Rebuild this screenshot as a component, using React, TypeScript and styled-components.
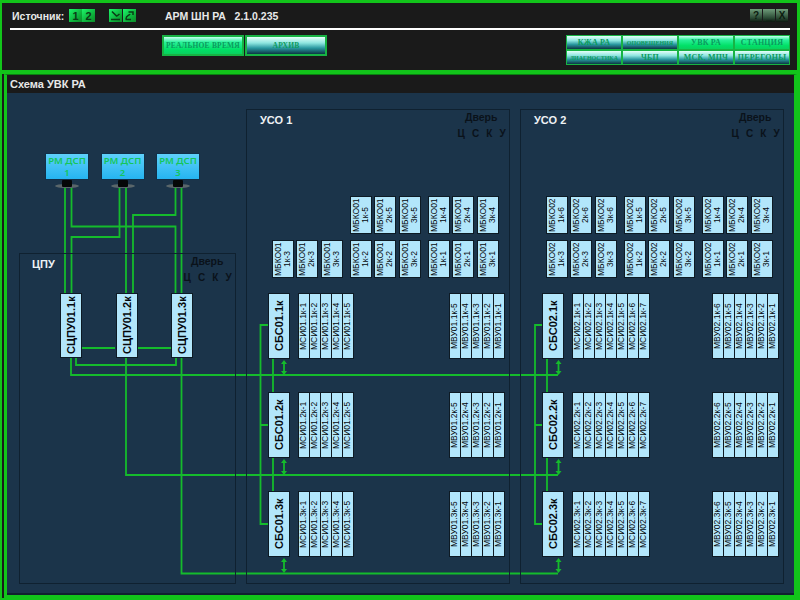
import * as React from 'react';
import styled, { createGlobalStyle } from 'styled-components';

const GREEN = '#12c41a';
const WIRE = '#15bb2c';

const GlobalStyle = createGlobalStyle`
  html, body {
    margin: 0;
    padding: 0;
    background: #1a1a1a;
  }
  * {
    box-sizing: border-box;
  }
`;

const Frame = styled.div`
  width: 800px;
  height: 600px;
  display: flex;
  flex-direction: column;
  overflow: hidden;
  background: #1a1a1a;
  border-style: solid;
  border-color: ${GREEN};
  border-width: 3px 3px 2px 2px;
  font-family: 'Liberation Sans', Arial, sans-serif;
`;

const Header = styled.header`
  height: 71px;
  flex: none;
  margin-right: -3px;
  margin-left: -2px;
  padding: 6px 10px 0 10px;
  border-bottom: 4px solid ${GREEN};
  display: flex;
  flex-direction: column;
`;

const TopRow = styled.div`
  height: 13px;
  display: flex;
  align-items: center;
`;

const Label = styled.span`
  color: #e8e8e8;
  font-size: 10.5px;
  font-weight: 700;
  white-space: pre;
`;

const SourceLabel = styled(Label)`
  margin-left: 2px;
  width: 57px;
`;

const IconGroup = styled.div<{ $gap: number }>`
  display: flex;
  gap: ${(p) => p.$gap}px;
  margin-right: 14px;
`;

const SourceButton = styled.div`
  width: 13px;
  height: 13px;
  display: flex;
  align-items: center;
  justify-content: center;
  background: linear-gradient(135deg, #1cf56a, #0ca836 70%, #0f8a2c);
  color: #0a3c16;
  font-size: 11px;
  font-weight: 700;
`;

const Title = styled(Label)`
  margin-left: 15px;
  flex: 1;
`;

const WindowButtons = styled.div`
  display: flex;
  gap: 1px;
  margin-right: 2px;
`;

const WindowButton = styled.div`
  width: 12px;
  height: 13px;
  display: flex;
  align-items: center;
  justify-content: center;
  background: linear-gradient(#6f9c7a, #2a4a34 70%, #0c160f);
  color: #0c1c10;
  font-size: 10px;
  font-weight: 700;
`;

const Rule = styled.div`
  height: 2px;
  margin-top: 6px;
  background: #fff;
`;

const ModeRow = styled.div`
  display: flex;
  justify-content: space-between;
  margin-top: 5px;
  padding-left: 152px;
`;

const ModeGroup = styled.div`
  display: flex;
  gap: 1px;
  align-items: flex-start;
`;

const NavGrid = styled.div`
  display: grid;
  grid-template-columns: repeat(4, 56px);
  grid-auto-rows: 15px;
`;

const GlossButton = styled.div<{ $active?: boolean; $wide?: boolean; $small?: boolean }>`
  width: ${(p) => (p.$wide ? '82px' : 'auto')};
  height: ${(p) => (p.$wide ? '21px' : 'auto')};
  display: flex;
  align-items: center;
  justify-content: center;
  border: ${(p) => (p.$wide ? 2 : 1)}px solid #17b344;
  background: ${(p) =>
    p.$active
      ? 'linear-gradient(#c8fff0, #2af29a 30%, #00e066 75%, #0ad060)'
      : 'linear-gradient(#e4fff8, #8fe6e0 35%, #2a98a0 65%, #0c3644)'};
  color: #0b9a5e;
  font-family: 'Liberation Serif', 'Times New Roman', serif;
  font-size: ${(p) => (p.$wide ? 7.5 : p.$small ? 6 : 8)}px;
  font-weight: 700;
  letter-spacing: ${(p) => (p.$small ? 0 : 0.2)}px;
  white-space: nowrap;
`;

const Panel = styled.section`
  flex: 1;
  min-height: 0;
  display: flex;
  flex-direction: column;
  margin-left: 2px;
  border-style: solid;
  border-color: #0a7f12 ${GREEN} ${GREEN} ${GREEN};
  border-width: 1px 3px 3px 3px;
`;

const PanelTitle = styled.div`
  height: 18px;
  flex: none;
  padding-left: 3px;
  display: flex;
  align-items: center;
  color: #e8e8e8;
  font-size: 11px;
  font-weight: 700;
  background: #1a1a1a;
`;

const Diagram = styled.div`
  position: relative;
  flex: 1;
  min-height: 0;
  display: flex;
  gap: 10px;
  padding: 16px 0 9px 12px;
  background: #1b344a;
  border-bottom: 2px solid #10212e;
`;

const Wires = styled.svg`
  position: absolute;
  left: 0;
  top: 0;
`;

const LeftColumn = styled.div`
  width: 217px;
  display: flex;
  flex-direction: column;
`;

const Monitors = styled.div`
  position: relative;
  display: flex;
  gap: 11.5px;
  margin: 44px 0 0 26px;
`;

const MonitorUnit = styled.div`
  width: 44px;
  display: flex;
  flex-direction: column;
  align-items: center;
`;

const Screen = styled.div`
  width: 44px;
  height: 27px;
  display: flex;
  flex-direction: column;
  align-items: center;
  justify-content: center;
  border: 1px solid #123048;
  background: linear-gradient(#5fd0fa, #25b4f0);
  color: #14c65c;
  font-family: 'Noto Sans', 'Open Sans', sans-serif;
  font-size: 9.5px;
  font-weight: 600;
  line-height: 12px;
  white-space: nowrap;
`;

const Cabinet = styled.div<{ $width?: number; $height?: number }>`
  position: relative;
  width: ${(p) => (p.$width ? `${p.$width}px` : '100%')};
  height: ${(p) => (p.$height ? `${p.$height}px` : 'auto')};
  margin-top: ${(p) => (p.$height ? 'auto' : '0')};
  border: 1px solid #0f2130;
`;

const CabinetHead = styled.div<{ $height: number; $pad: number }>`
  height: ${(p) => p.$height}px;
  display: flex;
  justify-content: space-between;
  padding: 1px 1px 0 ${(p) => p.$pad}px;
`;

const CabinetName = styled.div`
  color: #eef2f5;
  font-size: 11px;
  font-weight: 700;
  margin-top: 3px;
`;

const Door = styled.div`
  display: flex;
  flex-direction: column;
  align-items: center;
  color: #0a121a;
  font-weight: 700;
`;

const DoorTitle = styled.div`
  padding-right: 3px;
  font-size: 10.5px;
  line-height: 12px;
`;

const DoorKeys = styled.div`
  margin-top: 5px;
  font-size: 10px;
  line-height: 12px;
  letter-spacing: 2.2px;
  white-space: pre;
`;

const VerticalBox = styled.div<{ $w: number; $h: number; $size: number; $bold?: boolean }>`
  position: relative;
  flex: none;
  width: ${(p) => p.$w}px;
  height: ${(p) => p.$h}px;
  display: flex;
  align-items: center;
  justify-content: center;
  background: #b2e6fb;
  border: 1px solid #0d1a24;
  color: #05080c;
  font-size: ${(p) => p.$size}px;
  font-weight: ${(p) => (p.$bold ? 700 : 400)};
  line-height: ${(p) => p.$size + 1}px;
  text-align: center;
  white-space: nowrap;
  writing-mode: vertical-rl;
  transform: rotate(180deg);
`;

const StackedLine = styled.span`
  display: block;
`;

const ControllerRow = styled.div`
  display: flex;
  gap: 33.5px;
  padding-left: 40px;
`;

const MbkoRow = styled.div<{ $indent: number; $top: number }>`
  display: flex;
  gap: 7.5px;
  margin-top: ${(p) => p.$top}px;
  padding-left: ${(p) => p.$indent}px;
`;

const MbkoGroup = styled.div`
  display: flex;
  gap: 2.25px;
`;

const ShelfRow = styled.div<{ $top: number }>`
  display: flex;
  align-items: flex-start;
  margin-top: ${(p) => p.$top}px;
  padding: 0 4px 0 21px;
`;

const Strip = styled.div<{ $push?: boolean }>`
  display: flex;
  margin-left: ${(p) => (p.$push ? 'auto' : '7.5px')};

  & > * + * {
    margin-left: -1px;
  }
`;

const Stand = () => (
  <svg width="24" height="9" viewBox="0 0 24 9">
    <ellipse cx="12" cy="6" rx="12" ry="2" fill="#5a666a" />
    <rect x="7" y="0" width="10" height="7" rx="1" fill="#050708" />
  </svg>
);

const SourceIconOne = () => (
  <svg width="11" height="11" viewBox="0 0 11 11" fill="none" stroke="#0a3c16" strokeWidth="1.6">
    <path d="M2 1.5 L7 6.5 M1 9.5 H10 M7 6 L9.5 4" />
  </svg>
);

const SourceIconTwo = () => (
  <svg width="11" height="11" viewBox="0 0 11 11" fill="none" stroke="#0a3c16" strokeWidth="1.5">
    <path d="M2 9 C2 5 5 6 6 4 M4.5 2 H9 V5 M1.5 9.5 H7" />
  </svg>
);

const hLine = (x1: number, x2: number, y: number) => `M${x1} ${y}H${x2}`;
const vLine = (x: number, y1: number, y2: number) => `M${x} ${y1}V${y2}`;

const wirePaths = [
  vLine(65, 187, 293),
  `M71.5 187V226.5H175.5V293`,
  `M119.5 187V237H71.5V293`,
  vLine(126, 187, 293),
  `M175.5 187V215H133V293`,
  vLine(181.5, 187, 293),
  hLine(82, 115, 348),
  hLine(137, 171, 348),
  `M71 358V375H558`,
  `M76 358V365H176V358`,
  `M126 358V475H558`,
  `M181.5 358V573.5H558`,
  `M268 325H260.5V524H268`,
  hLine(260.5, 268, 425),
  vLine(273, 358, 392),
  vLine(273, 458, 491),
  `M542 325H535V524H542`,
  hLine(535, 542, 425),
  vLine(547, 358, 392),
  vLine(547, 458, 491),
];

const arrowRuns: [number, number][] = [
  [360, 375],
  [459, 475],
  [558, 573],
];

const DoubleArrow = ({ x, y1, y2 }: { x: number; y1: number; y2: number }) => (
  <g>
    <path d={vLine(x, y1 + 2, y2 - 2)} stroke={WIRE} strokeWidth="1.8" fill="none" />
    <path d={`M${x - 3} ${y1 + 4}L${x} ${y1}L${x + 3} ${y1 + 4}Z`} fill={WIRE} />
    <path d={`M${x - 3} ${y2 - 4}L${x} ${y2}L${x + 3} ${y2 - 4}Z`} fill={WIRE} />
  </g>
);

const Cell = ({ text }: { text: string }) => (
  <VerticalBox $w={12} $h={66} $size={8.5}>
    {text}
  </VerticalBox>
);

const Mbko = ({ unit, pos }: { unit: string; pos: string }) => (
  <VerticalBox $w={22} $h={38} $size={8.5}>
    <span>
      <StackedLine>МБКО{unit}</StackedLine>
      <StackedLine>{pos}</StackedLine>
    </span>
  </VerticalBox>
);

const MbkoTriple = ({ unit, slot }: { unit: string; slot: number }) => (
  <MbkoGroup>
    {[1, 2, 3].map((n) => (
      <Mbko key={n} unit={unit} pos={`${n}к-${slot}`} />
    ))}
  </MbkoGroup>
);

const range = (from: number, to: number) => {
  const out: number[] = [];
  const step = from <= to ? 1 : -1;
  for (let i = from; i !== to + step; i += step) out.push(i);
  return out;
};

const Uso = ({
  num,
  unit,
  upper,
  lower,
  upperIndent,
  lowerIndent,
  msi,
  mvu,
  width,
}: {
  num: number;
  unit: string;
  upper: number[];
  lower: number[];
  upperIndent: number;
  lowerIndent: number;
  msi: number;
  mvu: number;
  width: number;
}) => (
  <Cabinet $width={width}>
    <CabinetHead $height={86} $pad={13}>
      <CabinetName>УСО {num}</CabinetName>
      <Door>
        <DoorTitle>Дверь</DoorTitle>
        <DoorKeys>Ц С К У</DoorKeys>
      </Door>
    </CabinetHead>
    <MbkoRow $indent={upperIndent} $top={0}>
      {upper.map((slot) => (
        <MbkoTriple key={slot} unit={unit} slot={slot} />
      ))}
    </MbkoRow>
    <MbkoRow $indent={lowerIndent} $top={6}>
      {lower.map((slot) => (
        <MbkoTriple key={slot} unit={unit} slot={slot} />
      ))}
    </MbkoRow>
    {[1, 2, 3].map((k) => (
      <ShelfRow key={k} $top={k === 1 ? 15 : 33}>
        <VerticalBox $w={22} $h={66} $size={11} $bold>
          СБС{unit}.{k}к
        </VerticalBox>
        <Strip>
          {range(1, msi).map((n) => (
            <Cell key={n} text={`МСИ${unit}.${k}к-${n}`} />
          ))}
        </Strip>
        <Strip $push>
          {range(mvu, 1).map((n) => (
            <Cell key={n} text={`МВУ${unit}.${k}к-${n}`} />
          ))}
        </Strip>
      </ShelfRow>
    ))}
  </Cabinet>
);

const navButtons = [
  { text: 'КЖА РА' },
  { text: 'ОПОВЕЩЕНИЯ', small: true },
  { text: 'УВК РА', active: true },
  { text: 'СТАНЦИЯ', active: true },
  { text: 'ДИАГНОСТИКА', small: true },
  { text: 'ЧБП' },
  { text: 'МСК, МПЧ' },
  { text: 'ПЕРЕГОНЫ' },
];

export default function App() {
  return (
    <Frame>
      <GlobalStyle />
      <Header>
        <TopRow>
          <SourceLabel>Источник:</SourceLabel>
          <IconGroup $gap={0}>
            <SourceButton>1</SourceButton>
            <SourceButton>2</SourceButton>
          </IconGroup>
          <IconGroup $gap={1}>
            <SourceButton>
              <SourceIconOne />
            </SourceButton>
            <SourceButton>
              <SourceIconTwo />
            </SourceButton>
          </IconGroup>
          <Title>АРМ ШН РА   2.1.0.235</Title>
          <WindowButtons>
            <WindowButton>?</WindowButton>
            <WindowButton>_</WindowButton>
            <WindowButton>X</WindowButton>
          </WindowButtons>
        </TopRow>
        <Rule />
        <ModeRow>
          <ModeGroup>
            <GlossButton $wide $active>
              РЕАЛЬНОЕ ВРЕМЯ
            </GlossButton>
            <GlossButton $wide>АРХИВ</GlossButton>
          </ModeGroup>
          <NavGrid>
            {navButtons.map((b) => (
              <GlossButton key={b.text} $active={b.active} $small={b.small}>
                {b.text}
              </GlossButton>
            ))}
          </NavGrid>
        </ModeRow>
      </Header>
      <Panel>
        <PanelTitle>Схема УВК РА</PanelTitle>
        <Diagram>
          <Wires width="787" height="502" viewBox="7 93 787 502">
            <path d={wirePaths.join('')} fill="none" stroke={WIRE} strokeWidth="1.8" />
            {arrowRuns.map(([y1, y2]) => (
              <React.Fragment key={y1}>
                <DoubleArrow x={284} y1={y1} y2={y2} />
                <DoubleArrow x={558.5} y1={y1} y2={y2} />
              </React.Fragment>
            ))}
          </Wires>
          <LeftColumn>
            <Monitors>
              {[1, 2, 3].map((n) => (
                <MonitorUnit key={n}>
                  <Screen>
                    <span>РМ ДСП</span>
                    <span>{n}</span>
                  </Screen>
                  <Stand />
                </MonitorUnit>
              ))}
            </Monitors>
            <Cabinet $height={331}>
              <CabinetHead $height={39} $pad={12}>
                <CabinetName>ЦПУ</CabinetName>
                <Door>
                  <DoorTitle>Дверь</DoorTitle>
                  <DoorKeys>Ц С К У</DoorKeys>
                </Door>
              </CabinetHead>
              <ControllerRow>
                {[1, 2, 3].map((k) => (
                  <VerticalBox key={k} $w={22} $h={65} $size={11} $bold>
                    СЦПУ01.{k}к
                  </VerticalBox>
                ))}
              </ControllerRow>
            </Cabinet>
          </LeftColumn>
          <Uso
            num={1}
            unit="01"
            upper={[5, 4]}
            lower={[3, 2, 1]}
            upperIndent={103}
            lowerIndent={25}
            msi={5}
            mvu={5}
            width={264}
          />
          <Uso
            num={2}
            unit="02"
            upper={[6, 5, 4]}
            lower={[3, 2, 1]}
            upperIndent={25}
            lowerIndent={25}
            msi={7}
            mvu={6}
            width={264}
          />
        </Diagram>
      </Panel>
    </Frame>
  );
}
